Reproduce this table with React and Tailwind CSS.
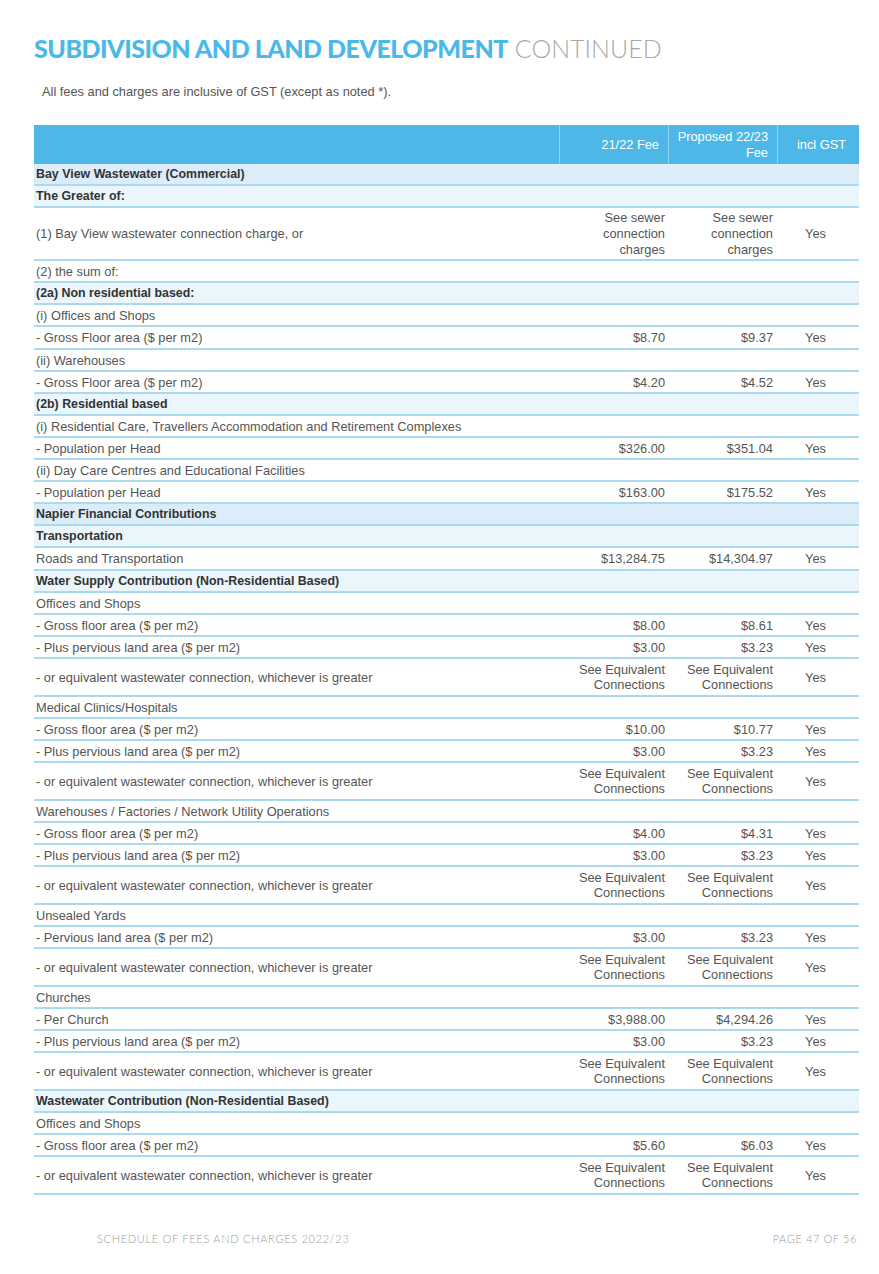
import React from "react";

const SEE = ["See Equivalent", "Connections"];
const rows = [
  { t: "h1", d: "Bay View Wastewater (Commercial)" },
  { t: "h2", d: "The Greater of:" },
  { d: "(1) Bay View wastewater connection charge, or", a: ["See sewer", "connection", "charges"], b: ["See sewer", "connection", "charges"], g: "Yes", h: 3 },
  { d: "(2) the sum of:" },
  { t: "h2", d: "(2a) Non residential based:" },
  { d: "(i) Offices and Shops" },
  { d: "- Gross Floor area ($ per m2)", a: "$8.70", b: "$9.37", g: "Yes", tall: true },
  { d: "(ii) Warehouses" },
  { d: "- Gross Floor area ($ per m2)", a: "$4.20", b: "$4.52", g: "Yes" },
  { t: "h2", d: "(2b) Residential based" },
  { d: "(i) Residential Care, Travellers Accommodation and Retirement Complexes" },
  { d: "- Population per Head", a: "$326.00", b: "$351.04", g: "Yes" },
  { d: "(ii) Day Care Centres and Educational Facilities" },
  { d: "- Population per Head", a: "$163.00", b: "$175.52", g: "Yes" },
  { t: "h1", d: "Napier Financial Contributions" },
  { t: "h2", d: "Transportation" },
  { d: "Roads and Transportation", a: "$13,284.75", b: "$14,304.97", g: "Yes", tall: true },
  { t: "h2", d: "Water Supply Contribution (Non-Residential Based)" },
  { d: "Offices and Shops" },
  { d: "- Gross floor area ($ per m2)", a: "$8.00", b: "$8.61", g: "Yes" },
  { d: "- Plus pervious land area ($ per m2)", a: "$3.00", b: "$3.23", g: "Yes" },
  { d: "- or equivalent wastewater connection, whichever is greater", a: SEE, b: SEE, g: "Yes", h: 2 },
  { d: "Medical Clinics/Hospitals" },
  { d: "- Gross floor area ($ per m2)", a: "$10.00", b: "$10.77", g: "Yes" },
  { d: "- Plus pervious land area ($ per m2)", a: "$3.00", b: "$3.23", g: "Yes" },
  { d: "- or equivalent wastewater connection, whichever is greater", a: SEE, b: SEE, g: "Yes", h: 2 },
  { d: "Warehouses / Factories / Network Utility Operations" },
  { d: "- Gross floor area ($ per m2)", a: "$4.00", b: "$4.31", g: "Yes" },
  { d: "- Plus pervious land area ($ per m2)", a: "$3.00", b: "$3.23", g: "Yes" },
  { d: "- or equivalent wastewater connection, whichever is greater", a: SEE, b: SEE, g: "Yes", h: 2 },
  { d: "Unsealed Yards" },
  { d: "- Pervious land area ($ per m2)", a: "$3.00", b: "$3.23", g: "Yes" },
  { d: "- or equivalent wastewater connection, whichever is greater", a: SEE, b: SEE, g: "Yes", h: 2 },
  { d: "Churches" },
  { d: "- Per Church", a: "$3,988.00", b: "$4,294.26", g: "Yes" },
  { d: "- Plus pervious land area ($ per m2)", a: "$3.00", b: "$3.23", g: "Yes" },
  { d: "- or equivalent wastewater connection, whichever is greater", a: SEE, b: SEE, g: "Yes", h: 2 },
  { t: "h2", d: "Wastewater Contribution (Non-Residential Based)" },
  { d: "Offices and Shops" },
  { d: "- Gross floor area ($ per m2)", a: "$5.60", b: "$6.03", g: "Yes" },
  { d: "- or equivalent wastewater connection, whichever is greater", a: SEE, b: SEE, g: "Yes", h: 2 },
];

function Val({ v }) {
  if (!v) return null;
  if (Array.isArray(v)) return v.map((l, i) => <div key={i}>{l}</div>);
  return <div>{v}</div>;
}

function Row({ r }) {
  const heightCls =
    r.h === 3 ? "h-[53px] leading-[16px]" : r.h === 2 ? "h-[38px] leading-[15px]" : r.tall ? "h-[23px] leading-[15px]" : "h-[22px] leading-[15px]";
  const bg = r.t === "h1" ? "bg-[#dcecf9]" : r.t === "h2" ? "bg-[#eaf5fc]" : "bg-white";
  const txt = r.t ? "font-bold text-[#333] text-[12.4px]" : "text-[#555]";
  return (
    <div className={`grid grid-cols-[526px_109px_109px_81px] ${heightCls} ${bg} border-b-2 border-[#a9daf2]`}>
      <div className={`flex items-center pl-[2px] ${txt}`}>{r.d}</div>
      <div className="flex flex-col justify-center items-end pr-[4px] text-right text-[#555]"><Val v={r.a} /></div>
      <div className="flex flex-col justify-center items-end pr-[5px] text-right text-[#555]"><Val v={r.b} /></div>
      <div className="flex items-center justify-center pr-[6px] text-[#555]">{r.g}</div>
    </div>
  );
}

export default function App() {
  return (
    <div className="w-[879px] h-[1274px] bg-white relative" style={{ fontFamily: '"Liberation Sans", Arial, sans-serif' }}>
      <div className="pt-[32px] pl-[34px] flex items-baseline" style={{ fontFamily: 'Lato, "Open Sans", sans-serif' }}>
        <span className="text-[25px] font-black text-[#4ab8e8] tracking-[-0.5px] leading-[32px]">SUBDIVISION AND LAND DEVELOPMENT</span>
        <span className="text-[25px] font-light text-[#a9a9a9] ml-[7px] leading-[32px]">CONTINUED</span>
      </div>
      <div className="pl-[42px] mt-[20px] text-[12.8px] text-[#555] leading-[15px]">
        All fees and charges are inclusive of GST (except as noted *).
      </div>
      <div className="ml-[34px] mt-[26px] w-[825px] text-[12.8px]">
        <div className="grid grid-cols-[526px_109px_109px_81px] h-[39px] bg-[#4db8e8] text-white leading-[16px]">
          <div className="border-r border-[#8fd2f1]"></div>
          <div className="flex items-center justify-end pr-[9px] border-r border-[#8fd2f1]">21/22 Fee</div>
          <div className="flex flex-col justify-center items-end pr-[9px] text-right border-r border-[#8fd2f1]">
            <div>Proposed 22/23</div>
            <div>Fee</div>
          </div>
          <div className="flex items-center justify-center pl-[6px]">incl GST</div>
        </div>
        {rows.map((r, i) => <Row key={i} r={r} />)}
      </div>
      <div className="absolute left-[97px] top-[1231px] text-[11px] text-[#9a9a9a] tracking-[0.7px] font-light" style={{ fontFamily: 'Lato, sans-serif' }}>
        SCHEDULE OF FEES AND CHARGES 2022/23
      </div>
      <div className="absolute right-[22px] top-[1231px] text-[11px] text-[#9a9a9a] tracking-[0.6px] font-light" style={{ fontFamily: 'Lato, sans-serif' }}>
        PAGE 47 OF 56
      </div>
    </div>
  );
}
